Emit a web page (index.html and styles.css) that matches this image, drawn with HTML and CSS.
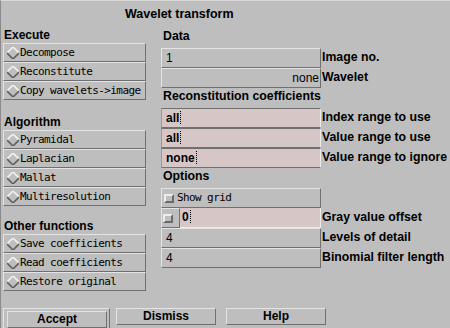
FILE: index.html
```html
<!DOCTYPE html>
<html>
<head>
<meta charset="utf-8">
<link rel="stylesheet" href="styles.css">
</head>
<body>
<div class="win">
  <div class="title">Wavelet transform</div>
  <div class="main">
    <div class="left">
      <div class="head head-exec">Execute</div>
      <div class="btn"><svg class="dia" width="12" height="12" viewBox="0 0 12 12"><polygon points="6,0 12,6 6,12 0,6" fill="#bebebe"/><polyline points="0,6 6,0 12,6" fill="none" stroke="#f2f2f2" stroke-width="1.6"/><polyline points="0,6 6,12 12,6" fill="none" stroke="#5e5e5e" stroke-width="1.6"/></svg>Decompose</div>
      <div class="btn"><svg class="dia" width="12" height="12" viewBox="0 0 12 12"><polygon points="6,0 12,6 6,12 0,6" fill="#bebebe"/><polyline points="0,6 6,0 12,6" fill="none" stroke="#f2f2f2" stroke-width="1.6"/><polyline points="0,6 6,12 12,6" fill="none" stroke="#5e5e5e" stroke-width="1.6"/></svg>Reconstitute</div>
      <div class="btn"><svg class="dia" width="12" height="12" viewBox="0 0 12 12"><polygon points="6,0 12,6 6,12 0,6" fill="#bebebe"/><polyline points="0,6 6,0 12,6" fill="none" stroke="#f2f2f2" stroke-width="1.6"/><polyline points="0,6 6,12 12,6" fill="none" stroke="#5e5e5e" stroke-width="1.6"/></svg>Copy wavelets-&gt;image</div>

      <div class="head head-algo">Algorithm</div>
      <div class="btn"><svg class="dia" width="12" height="12" viewBox="0 0 12 12"><polygon points="6,0 12,6 6,12 0,6" fill="#bebebe"/><polyline points="0,6 6,0 12,6" fill="none" stroke="#f2f2f2" stroke-width="1.6"/><polyline points="0,6 6,12 12,6" fill="none" stroke="#5e5e5e" stroke-width="1.6"/></svg>Pyramidal</div>
      <div class="btn"><svg class="dia" width="12" height="12" viewBox="0 0 12 12"><polygon points="6,0 12,6 6,12 0,6" fill="#bebebe"/><polyline points="0,6 6,0 12,6" fill="none" stroke="#f2f2f2" stroke-width="1.6"/><polyline points="0,6 6,12 12,6" fill="none" stroke="#5e5e5e" stroke-width="1.6"/></svg>Laplacian</div>
      <div class="btn"><svg class="dia" width="12" height="12" viewBox="0 0 12 12"><polygon points="6,0 12,6 6,12 0,6" fill="#bebebe"/><polyline points="0,6 6,0 12,6" fill="none" stroke="#f2f2f2" stroke-width="1.6"/><polyline points="0,6 6,12 12,6" fill="none" stroke="#5e5e5e" stroke-width="1.6"/></svg>Mallat</div>
      <div class="btn"><svg class="dia" width="12" height="12" viewBox="0 0 12 12"><polygon points="6,0 12,6 6,12 0,6" fill="#bebebe"/><polyline points="0,6 6,0 12,6" fill="none" stroke="#f2f2f2" stroke-width="1.6"/><polyline points="0,6 6,12 12,6" fill="none" stroke="#5e5e5e" stroke-width="1.6"/></svg>Multiresolution</div>

      <div class="head head-other">Other functions</div>
      <div class="btn"><svg class="dia" width="12" height="12" viewBox="0 0 12 12"><polygon points="6,0 12,6 6,12 0,6" fill="#bebebe"/><polyline points="0,6 6,0 12,6" fill="none" stroke="#f2f2f2" stroke-width="1.6"/><polyline points="0,6 6,12 12,6" fill="none" stroke="#5e5e5e" stroke-width="1.6"/></svg>Save coefficients</div>
      <div class="btn"><svg class="dia" width="12" height="12" viewBox="0 0 12 12"><polygon points="6,0 12,6 6,12 0,6" fill="#bebebe"/><polyline points="0,6 6,0 12,6" fill="none" stroke="#f2f2f2" stroke-width="1.6"/><polyline points="0,6 6,12 12,6" fill="none" stroke="#5e5e5e" stroke-width="1.6"/></svg>Read coefficients</div>
      <div class="btn"><svg class="dia" width="12" height="12" viewBox="0 0 12 12"><polygon points="6,0 12,6 6,12 0,6" fill="#bebebe"/><polyline points="0,6 6,0 12,6" fill="none" stroke="#f2f2f2" stroke-width="1.6"/><polyline points="0,6 6,12 12,6" fill="none" stroke="#5e5e5e" stroke-width="1.6"/></svg>Restore original</div>
    </div>

    <div class="right">
      <div class="rhead">Data</div>
      <div class="row"><div class="field">1</div><div class="lbl">Image no.</div></div>
      <div class="row"><div class="field field-r">none</div><div class="lbl">Wavelet</div></div>

      <div class="rhead">Reconstitution coefficients</div>
      <div class="row"><div class="field pink">all<span class="caret"></span></div><div class="lbl">Index range to use</div></div>
      <div class="row"><div class="field pink">all<span class="caret"></span></div><div class="lbl">Value range to use</div></div>
      <div class="row"><div class="field pink">none<span class="caret"></span></div><div class="lbl">Value range to ignore</div></div>

      <div class="rhead">Options</div>
      <div class="row"><div class="field check"><span class="box"></span>Show grid</div></div>
      <div class="row"><div class="field split"><div class="boxbtn"><span class="box"></span></div><div class="pinkpart">0<span class="caret"></span></div></div><div class="lbl">Gray value offset</div></div>
      <div class="row"><div class="field">4</div><div class="lbl">Levels of detail</div></div>
      <div class="row"><div class="field">4</div><div class="lbl">Binomial filter length</div></div>
    </div>
  </div>
  <div class="actions">
    <div class="deflt"><div class="abtn abtn-accept">Accept</div></div>
    <div class="abtn abtn-dismiss">Dismiss</div>
    <div class="abtn abtn-help">Help</div>
  </div>
</div>
</body>
</html>
```

FILE: styles.css
```css
html, body {
  margin: 0;
  padding: 0;
  background: #bebebe;
}
.win {
  width: 450px;
  height: 328px;
  box-sizing: border-box;
  background: #bebebe;
  border-left: 1px solid #8a8a8a;
  border-top: 1px solid #d8d8d8;
  overflow: hidden;
  font-family: "Liberation Sans", Arial, sans-serif;
  color: #000;
}
.title {
  height: 27px;
  line-height: 27px;
  padding-left: 124px;
  font-weight: bold;
  font-size: 12.5px;
}
.main {
  display: flex;
  height: 280px;
}
.left {
  width: 143px;
  margin-left: 2px;
  display: flex;
  flex-direction: column;
}
.head {
  font-weight: bold;
  font-size: 12px;
  line-height: 15px;
  padding-left: 1px;
}
.head-exec { height: 15px; }
.head-algo { padding-top: 15px; }
.head-other { padding-top: 13px; }
.btn {
  height: 19px;
  box-sizing: border-box;
  border-top: 1px solid #e4e4e4;
  border-left: 1px solid #e4e4e4;
  border-bottom: 1px solid #707070;
  border-right: 1px solid #707070;
  display: flex;
  align-items: center;
  font-family: "DejaVu Sans Mono", monospace;
  font-size: 11px;
  letter-spacing: -0.6px;
  white-space: nowrap;
}
.dia {
  margin-left: 3px;
  margin-right: 1px;
  flex: none;
}
.right {
  margin-left: 15px;
  display: flex;
  flex-direction: column;
}
.rhead {
  height: 20px;
  box-sizing: border-box;
  padding: 1px 0 0 2px;
  line-height: 15px;
  font-weight: bold;
  font-size: 12.3px;
  white-space: nowrap;
}
.row {
  display: flex;
  height: 20px;
  align-items: stretch;
}
.field {
  width: 160px;
  box-sizing: border-box;
  border-top: 1px solid #e4e4e4;
  border-left: 1px solid #e4e4e4;
  border-bottom: 1px solid #707070;
  border-right: 1px solid #707070;
  padding-left: 4px;
  font-size: 12px;
  line-height: 18px;
  white-space: nowrap;
  flex: none;
}
.field-r {
  text-align: right;
  padding-right: 1px;
}
.pink {
  background: #d6c6c6;
  border-top: 1px solid #707070;
  border-left: 1px solid #9a9a9a;
  border-bottom: 1px solid #707070;
  border-right: 1px solid #ececec;
  font-weight: bold;
}
.lbl {
  padding-left: 1px;
  font-weight: bold;
  font-size: 12.3px;
  line-height: 18px;
  white-space: nowrap;
}
.caret {
  display: inline-block;
  width: 1px;
  height: 13px;
  margin-left: 1px;
  vertical-align: -2px;
  border-left: 1px dotted #000;
}
.check {
  display: flex;
  align-items: center;
  padding-left: 2px;
  font-family: "DejaVu Sans Mono", monospace;
  font-size: 11px;
  letter-spacing: -0.6px;
}
.box {
  display: inline-block;
  width: 10px;
  height: 9px;
  box-sizing: border-box;
  border-top: 2px solid #eeeeee;
  border-left: 2px solid #eeeeee;
  border-bottom: 2px solid #6a6a6a;
  border-right: 2px solid #6a6a6a;
  margin-right: 3px;
  flex: none;
}
.split {
  display: flex;
  padding: 0;
  border: none;
}
.boxbtn {
  width: 19px;
  box-sizing: border-box;
  border-top: 1px solid #e4e4e4;
  border-left: 1px solid #e4e4e4;
  border-bottom: 1px solid #707070;
  border-right: 1px solid #707070;
  display: flex;
  align-items: center;
  padding-left: 1px;
}
.pinkpart {
  flex: 1;
  background: #d6c6c6;
  border-bottom: 1px solid #ececec;
  border-right: 1px solid #ececec;
  padding-left: 2px;
  font-weight: bold;
  line-height: 19px;
}
.actions {
  display: flex;
  align-items: flex-start;
  height: 21px;
  border-bottom: 1px solid #6a6a6a;
}
.deflt {
  margin-left: 2px;
  width: 107px;
  height: 21px;
  box-sizing: border-box;
  border-top: 1px solid #e4e4e4;
  border-left: 1px solid #e4e4e4;
  border-right: 1px solid #707070;
  padding: 2px 2px 0 3px;
}
.abtn {
  width: 100px;
  height: 17px;
  box-sizing: border-box;
  border-top: 1px solid #e4e4e4;
  border-left: 1px solid #e4e4e4;
  border-bottom: 1px solid #707070;
  border-right: 1px solid #707070;
  text-align: center;
  font-weight: bold;
  font-size: 12px;
  line-height: 15px;
}
.abtn-dismiss { margin-left: 6px; }
.abtn-help { margin-left: 10px; }
```
